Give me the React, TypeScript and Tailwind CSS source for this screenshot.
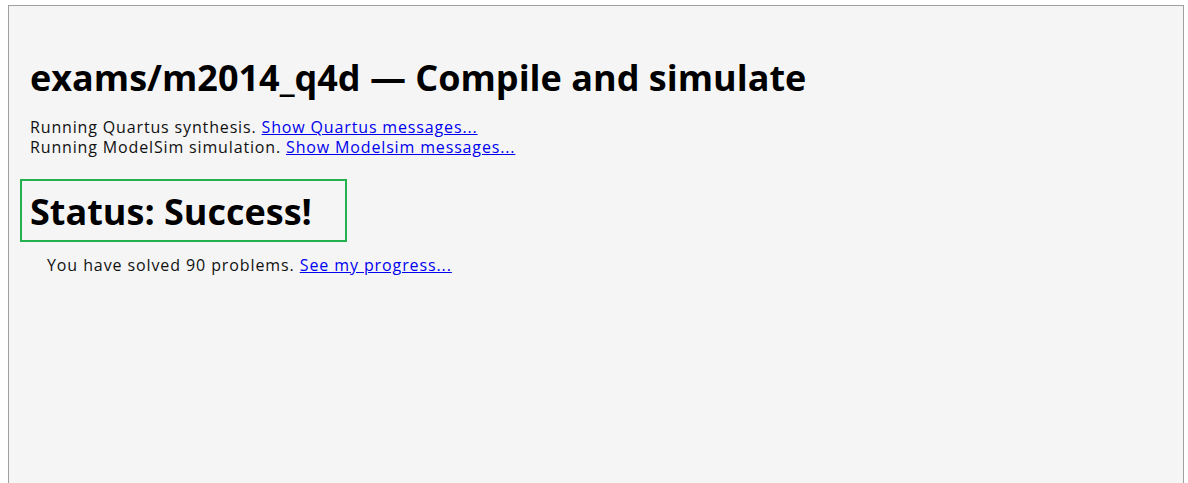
export default function App() {
  return (
    <div className="h-screen bg-white pt-[5px] pl-[8px] overflow-hidden">
      <div className="w-[1176px] h-[520px] border border-[#a0a0a0] bg-[#f5f5f5] pl-[11px] pt-[52px] text-black">
        <h1
          className="pl-[10px] text-[36px] leading-[40px] font-bold"
          style={{ fontFamily: '"Open Sans", sans-serif' }}
        >
          exams/m2014_q4d — Compile and simulate
        </h1>
        <div
          className="pl-[10px] mt-[19px] text-[16px] leading-[20px] tracking-[0.85px] text-[#111]"
          style={{ fontFamily: '"Open Sans", sans-serif' }}
        >
          <div>
            Running Quartus synthesis.{" "}
            <a href="#" className="text-[#0000ee] underline">Show Quartus messages...</a>
          </div>
          <div>
            Running ModelSim simulation.{" "}
            <a href="#" className="text-[#0000ee] underline">Show Modelsim messages...</a>
          </div>
        </div>
        <div className="mt-[22px] w-[327px] h-[63px] border-2 border-[#22b14c] pl-[8px] pt-[11px]">
          <h2
            className="text-[36px] leading-[40px] font-bold"
            style={{ fontFamily: '"Open Sans", sans-serif' }}
          >
            Status: Success!
          </h2>
        </div>
        <div
          className="mt-[13px] pl-[27px] text-[16px] leading-[20px] tracking-[0.9px] text-[#111]"
          style={{ fontFamily: '"Open Sans", sans-serif' }}
        >
          You have solved 90 problems.{" "}
          <a href="#" className="text-[#0000ee] underline">See my progress...</a>
        </div>
      </div>
    </div>
  );
}
